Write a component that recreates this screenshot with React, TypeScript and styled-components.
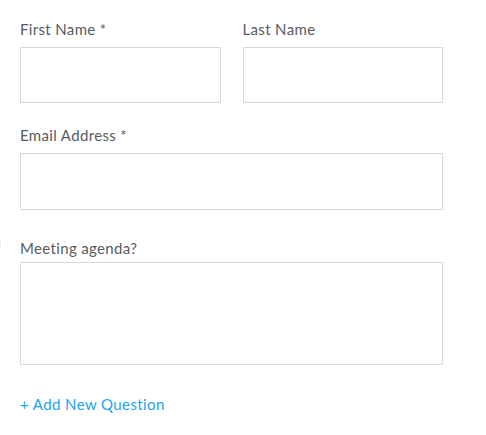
import React from "react";
import styled, { createGlobalStyle } from "styled-components";

const Global = createGlobalStyle`
  html, body { margin: 0; padding: 0; background: #fff; }
  body { font-family: "Lato", "Liberation Sans", sans-serif; }
`;

const Form = styled.div`
  position: relative;
  width: 486px;
  height: 435px;
  box-sizing: border-box;
  padding: 19px 0 0 20px;
`;

const Row = styled.div`
  display: flex;
  gap: 22px;
  width: 423px;
`;

const Field = styled.div<{ $top?: number; $grow?: boolean }>`
  display: flex;
  flex-direction: column;
  margin-top: ${(p) => p.$top ?? 0}px;
  flex: ${(p) => (p.$grow ? 1 : "none")};
  width: ${(p) => (p.$grow ? "auto" : "423px")};
`;

const Label = styled.label<{ $gap?: number }>`
  font-size: 15px;
  line-height: 20px;
  letter-spacing: 0.35px;
  color: #585c61;
  margin-bottom: ${(p) => p.$gap ?? 8}px;
`;

const Box = styled.div<{ $h: number }>`
  box-sizing: border-box;
  height: ${(p) => p.$h}px;
  border: 1px solid #d9d9d9;
  background: #fff;
`;

const AddLink = styled.a`
  display: block;
  margin-top: 29px;
  font-size: 15px;
  line-height: 20px;
  letter-spacing: 0.4px;
  color: #1ba4ec;
  cursor: pointer;
`;

const Handle = styled.span`
  position: absolute;
  left: 0;
  top: 238px;
  width: 1px;
  height: 12px;
  background: #f0f0f0;
`;

export default function App() {
  return (
    <>
      <Global />
      <Form>
        <Row>
          <Field $grow>
            <Label>First Name *</Label>
            <Box $h={56} />
          </Field>
          <Field $grow>
            <Label>Last Name</Label>
            <Box $h={56} />
          </Field>
        </Row>
        <Field $top={22}>
          <Label>Email Address *</Label>
          <Box $h={57} />
        </Field>
        <Handle />
        <Field $top={28}>
          <Label $gap={4}>Meeting agenda?</Label>
          <Box $h={103} />
        </Field>
        <AddLink>+ Add New Question</AddLink>
      </Form>
    </>
  );
}
